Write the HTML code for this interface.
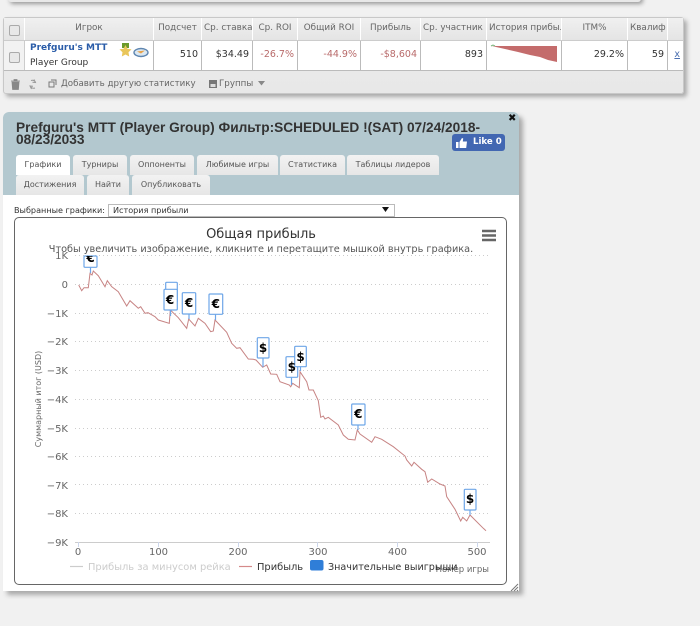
<!DOCTYPE html>
<html><head><meta charset="utf-8"><style>
html,body{margin:0;padding:0;width:700px;height:626px;overflow:hidden;background:#f1f1f1}
body{position:relative;font-family:"DejaVu Sans","Liberation Sans",sans-serif;color:#333;filter:blur(.3px)}
div,span{position:absolute;box-sizing:border-box;white-space:nowrap}
.h{top:18px;height:22px;background:linear-gradient(#f0f0f0,#e4e4e4);color:#666;font-size:8.8px;line-height:21px;text-align:center;overflow:hidden;border-right:1px solid #fff}
.l{text-align:left;padding-left:2px}
.c{top:41px;height:29px;background:#fff;font-size:9.5px;line-height:28px;text-align:right;border-right:1px solid #bbb;padding-right:3px;color:#333}
.r{color:#b86a6a}
.t{height:20px;background:linear-gradient(#f2f2f2,#e6e6e6);border-radius:3px 3px 0 0;font-size:8px;line-height:19px;text-align:center;color:#555}
.cb{width:11px;height:11px;border:1px solid #aaa;border-radius:2px;background:#e8e8e8}
</style></head><body>

<!-- previous panel remnant -->
<div style="left:8px;top:-10px;width:633px;height:12px;background:#e8e8e8;box-shadow:2px 2px 4px #999;border-radius:3px"></div>

<!-- top table -->
<div style="left:3px;top:17px;width:681px;height:77px;background:linear-gradient(#ececec,#e8e8e8);border:1px solid #c8c8c8;border-radius:3px;box-shadow:3px 3px 4px #aaa"></div>
<div style="left:4px;top:40px;width:679px;height:1px;background:#ccc"></div>
<div style="left:4px;top:70px;width:679px;height:1px;background:#bbb"></div>

<div class="h" style="left:4px;width:21px"></div>
<div class="cb" style="left:9px;top:25px"></div>
<div class="h" style="left:25px;width:129px">Игрок</div>
<div class="h" style="left:154px;width:48px">Подсчет</div>
<div class="h l" style="left:202px;width:51px;padding-right:2px">Ср. ставка</div>
<div class="h" style="left:253px;width:45px">Ср. ROI</div>
<div class="h" style="left:298px;width:63px">Общий ROI</div>
<div class="h" style="left:361px;width:60px">Прибыль</div>
<div class="h l" style="left:421px;width:66px">Ср. участник</div>
<div class="h l" style="left:487px;width:75px">История прибыли</div>
<div class="h" style="left:562px;width:66px">ITM%</div>
<div class="h l" style="left:628px;width:40px">Квалиф</div>
<div class="h" style="left:668px;width:15px;border-right:0"></div>

<div class="c" style="left:4px;width:21px;border-right:1px solid #ccc;background:#f2f2f2"></div>
<div class="cb" style="left:9px;top:52px"></div>
<div class="c" style="left:25px;width:129px"></div>
<div style="left:30px;top:42px;font-size:9px;font-weight:bold;color:#2a5ca8;line-height:12px">Prefguru's MTT</div>
<div style="left:30px;top:58px;font-size:9px;color:#333;line-height:11px">Player Group</div>
<svg style="position:absolute;left:119px;top:42px" width="30" height="17" viewBox="0 0 30 17">
<rect x="3" y="1" width="7" height="5" fill="#6a9a2a"/>
<path d="M6.500 3l1.900 3.800 4.100.6-3 2.900.7 4.200-3.700-2-3.700 2 .7-4.200-3-2.900 4.100-.6z" fill="#e9c65a"/>
<ellipse cx="22" cy="10.500" rx="7" ry="4" fill="#dbe8f2" stroke="#5f86b0" stroke-width="1.400"/>
<path d="M18 9.500l4 2 4-3z" fill="#e8a24a"/>
</svg>
<div class="c" style="left:154px;width:48px">510</div>
<div class="c" style="left:202px;width:51px">$34.49</div>
<div class="c r" style="left:253px;width:45px">-26.7%</div>
<div class="c r" style="left:298px;width:63px">-44.9%</div>
<div class="c r" style="left:361px;width:60px">-$8,604</div>
<div class="c" style="left:421px;width:66px">893</div>
<div class="c" style="left:487px;width:75px"></div>
<svg style="position:absolute;left:490px;top:44px" width="70" height="20" viewBox="0 0 70 20">
<path d="M2 2H67V18L58 16 50 13 40 11 28 8 15 5 6 3z" fill="#c46c6c"/>
<path d="M1 2l2-1 2 1" stroke="#7ab27a" fill="none" stroke-width="1"/>
</svg>
<div class="c" style="left:562px;width:66px">29.2%</div>
<div class="c" style="left:628px;width:40px">59</div>
<div class="c" style="left:668px;width:15px;border-right:0;padding-right:3px;color:#4a6fb0;text-decoration:underline">x</div>

<!-- toolbar -->
<svg style="position:absolute;left:9px;top:78px" width="50" height="13" viewBox="0 0 50 13">
<path d="M2 3h9M5 3V1.500h3V3M3 4h7l-.6 7.500H3.600z" fill="#888" stroke="#888" stroke-width=".8"/>
<path d="M22 2.500a4 4 0 0 1 4.500 1.500M26 10a4 4 0 0 1-4.500-1.500M25 1.500l1.500 3-3-.3M22.500 11l-1.500-3 3 .3" fill="none" stroke="#999" stroke-width="1"/>
<path d="M40 4h5v5h-5zM42 2h5v5" fill="none" stroke="#777" stroke-width="1"/>
</svg>
<div style="left:61px;top:77px;font-size:8.700px;line-height:14px;color:#666">Добавить другую статистику</div>
<svg style="position:absolute;left:208px;top:79px" width="10" height="10" viewBox="0 0 10 10"><rect x="1" y="1" width="8" height="8" fill="#777"/><rect x="2.500" y="5" width="5" height="3" fill="#ddd"/></svg>
<div style="left:219px;top:77px;font-size:8.700px;line-height:14px;color:#666">Группы</div>
<svg style="position:absolute;left:258px;top:81px" width="8" height="5"><path d="M0 0h7L3.500 4.500z" fill="#888"/></svg>

<!-- window -->
<div style="left:3px;top:112px;width:516px;height:479px;background:#fff;border-radius:6px 6px 0 0;box-shadow:4px 4px 5px #aaa"></div>
<div style="left:3px;top:112px;width:516px;height:83px;background:#b3c8cf;border-radius:6px 6px 0 0"></div>
<div style="left:16px;top:122px;font:bold 13.700px/12px 'Liberation Sans',sans-serif;color:#333">Prefguru's MTT (Player Group) Фильтр:SCHEDULED !(SAT) 07/24/2018-<br>08/23/2033</div>
<div style="left:508px;top:113px;font:bold 10px/12px 'DejaVu Sans',sans-serif;color:#111">✖</div>
<div style="left:452px;top:134px;width:53px;height:17px;background:#4267b2;border-radius:3px"></div>
<svg style="position:absolute;left:456px;top:137px" width="12" height="12" viewBox="0 0 12 12"><path d="M0 5h2.500v6H0zM3.500 5l2.500-4 1.200.5L6.800 4.500H11l-.8 6.500H3.500z" fill="#fff"/></svg>
<div style="left:473px;top:134px;font:bold 8.600px/17px 'DejaVu Sans',sans-serif;color:#fff">Like 0</div>

<!-- tabs -->
<div class="t" style="left:16px;top:155px;width:54px;background:#fff">Графики</div>
<div class="t" style="left:73px;top:155px;width:54px">Турниры</div>
<div class="t" style="left:130px;top:155px;width:64px">Оппоненты</div>
<div class="t" style="left:197px;top:155px;width:81px">Любимые игры</div>
<div class="t" style="left:280px;top:155px;width:65px">Статистика</div>
<div class="t" style="left:347px;top:155px;width:92px">Таблицы лидеров</div>
<div class="t" style="left:16px;top:175px;width:68px">Достижения</div>
<div class="t" style="left:87px;top:175px;width:42px">Найти</div>
<div class="t" style="left:132px;top:175px;width:78px">Опубликовать</div>

<div style="left:14px;top:204px;font-size:8.100px;line-height:13px;color:#333">Выбранные графики:</div>
<div style="left:108px;top:204px;width:287px;height:13px;background:#fff;border:1px solid #bbb;font-size:8.100px;line-height:11px;padding-left:4px;color:#333">История прибыли</div>
<svg style="position:absolute;left:382px;top:207px" width="8" height="6"><path d="M0 0h7L3.500 5z" fill="#111"/></svg>

<!-- chart -->
<div style="left:14px;top:217px;width:493px;height:368px;border:1px solid #666;border-radius:5px;background:#fff"></div>
<svg style="position:absolute;left:0;top:0" width="700" height="626" viewBox="0 0 700 626" font-family="'DejaVu Sans','Liberation Sans',sans-serif">
<g stroke="#ccc" stroke-width="1" stroke-dasharray="1 3">
<path d="M75 255.500H488M75 284.500H488M75 313.500H488M75 341.500H488M75 370.500H488M75 399.500H488M75 428.500H488M75 456.500H488M75 484.500H488M75 513.500H488"/>
</g>
<path d="M75 542.500H490" stroke="#ccc"/>
<path d="M78.500 542v5M158.500 542v5M238.500 542v5M317.500 542v5M397.500 542v5M477.500 542v5" stroke="#ccd6eb"/>
<text x="261" y="238" font-size="13" text-anchor="middle" fill="#333">Общая прибыль</text>
<text x="261" y="252" font-size="9.720" text-anchor="middle" fill="#555">Чтобы увеличить изображение, кликните и перетащите мышкой внутрь графика.</text>
<g font-size="10" fill="#666" text-anchor="end">
<text x="68" y="259">1K</text><text x="68" y="288">0</text><text x="68" y="317">−1K</text><text x="68" y="345">−2K</text><text x="68" y="374">−3K</text><text x="68" y="403">−4K</text><text x="68" y="432">−5K</text><text x="68" y="460">−6K</text><text x="68" y="489">−7K</text><text x="68" y="517">−8K</text><text x="68" y="546">−9K</text>
</g>
<g font-size="10" fill="#666" text-anchor="middle">
<text x="78" y="555">0</text><text x="158.500" y="555">100</text><text x="238" y="555">200</text><text x="318" y="555">300</text><text x="397.500" y="555">400</text><text x="477" y="555">500</text>
</g>
<text transform="translate(41 399) rotate(-90)" font-size="8" text-anchor="middle" fill="#666">Суммарный итог (USD)</text>
<text x="489" y="572" font-size="8.500" text-anchor="end" fill="#666">Номер игры</text>

<path fill="none" stroke="#c78484" stroke-width="1" d="M78.700 285L81.700 290.700 84 287.700 88.300 287.700 90 273.300 92 275 93.300 271 98.300 275.700 105 286.700 107.300 280.700 111.700 286.700 118.300 291.700 126.700 306 130 300.700 138.300 308.300 140.700 306.700 145 313.300 148 312.700 155 316.700 158.300 320 169.300 323.300 170.300 310 178.300 317.700 186.700 328.300 188.700 319 195 326 198.300 318.300 205 323.300 210.700 331.700 213.300 331 215 320 226.700 332.300 231.700 343.300 236.700 348.300 240 347.700 248.300 359 253.300 359.300 256 360 262.700 367.300 266.700 365 270.700 374 276.700 374.300 280 381.700 289.300 385 290.700 386.700 292.700 383.300 299.300 387.700 300 371.700 306.700 381.700 309 390 313.300 390 318.300 400.700 320.700 417.300 323.300 416 325 419 328.300 417.300 338.300 425 343.300 435 348.300 439.300 355 440 357.300 430 360 434 371.700 442.300 375 436.700 381.700 439.300 393.300 446.700 405 456 406.700 460 411.700 466 414 462.300 421.700 469.300 425 471.700 427.700 482.300 431.700 479 440 484 445 486 446.700 496.700 455 509.300 460.700 521 462.700 517.300 466.700 521 470 515 483.300 528.300 486 530.700"/>

<g stroke="#6ea6e8" stroke-width="1.200" fill="#fff">
<path d="M90.500 267.300V273"/><rect x="84" y="256" width="13" height="11.300" rx="1"/>
<rect x="165.700" y="282.300" width="11.600" height="20" rx="1"/>
<path d="M170.500 310V316"/><rect x="164" y="289.300" width="13.300" height="20.700" rx="1"/>
<path d="M189 314V319"/><rect x="182.300" y="292.700" width="13.400" height="21.300" rx="1"/>
<path d="M215.500 314.300V320"/><rect x="209" y="294" width="13.700" height="20.300" rx="1"/>
<path d="M263 358V367"/><rect x="257.300" y="337.700" width="11.700" height="20.300" rx="1"/>
<path d="M291.500 377.300V385"/><rect x="286" y="356.700" width="11.700" height="20.600" rx="1"/>
<path d="M300.500 366.700V371"/><rect x="294.700" y="346.300" width="11.600" height="20.400" rx="1"/>
<path d="M358 425V430"/><rect x="351.700" y="404" width="13.300" height="21" rx="1"/>
<path d="M470 510V515"/><rect x="464.300" y="489.300" width="11.700" height="20.700" rx="1"/>
</g>
<g font-size="12" font-weight="bold" text-anchor="middle" fill="#000">
<text x="170" y="304">€</text>
<text x="189" y="307">€</text>
<text x="215.800" y="308">€</text>
<text x="263" y="352">$</text>
<text x="291.800" y="371">$</text>
<text x="300.500" y="361">$</text>
<text x="358.300" y="418">€</text>
<text x="470" y="503">$</text>
<clipPath id="k"><rect x="80" y="256" width="20" height="12"/></clipPath>
<text x="90.500" y="262" clip-path="url(#k)">€</text>
</g>

<path d="M70 566.500H83" stroke="#ccc" stroke-width="1.200"/>
<text x="88" y="570" font-size="9.900" fill="#ccc">Прибыль за минусом рейка</text>
<path d="M239 566.500H252" stroke="#d58a8a" stroke-width="1.200"/>
<text x="257" y="570" font-size="9.900" fill="#333">Прибыль</text>
<rect x="310" y="560" width="13.500" height="10.500" rx="2" fill="#2f7ed8"/>
<text x="328" y="570" font-size="9.600" fill="#333">Значительные выигрыши</text>

<path d="M482 231h14M482 235.500h14M482 240h14" stroke="#666" stroke-width="2.500"/>
<path d="M511 591l7-7M514 591l4-4M517 591l1-1" stroke="#777" stroke-width="1"/>
</svg>
</body></html>
